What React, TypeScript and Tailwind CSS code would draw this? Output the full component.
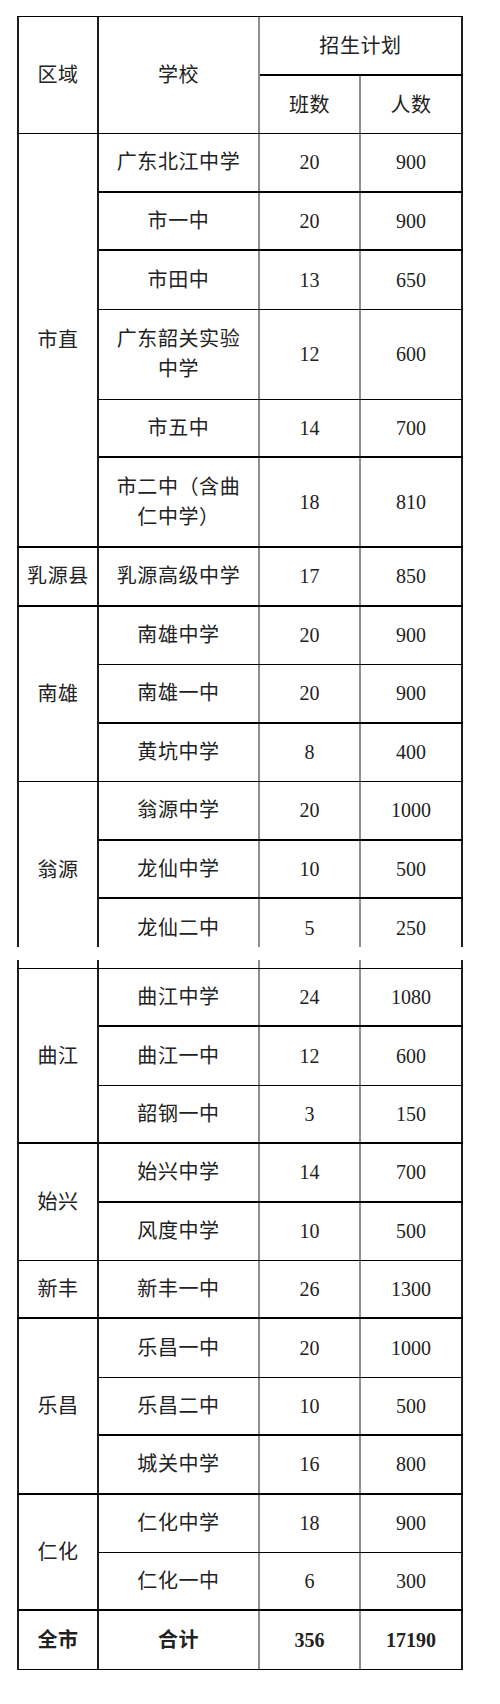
import React from "react";

type B = "t" | "n" | "x";
type Row = { school: string[]; cls: string; num: string; b: B; h?: string; clip?: boolean };
type Group = { region: string; rows: Row[]; b: B; clipRegion?: boolean; bold?: boolean };

const FONT = "font-['Liberation_Serif','Noto_Sans_CJK_SC',serif]";

const seg1: Group[] = [
  {
    region: "市直",
    b: "t",
    rows: [
      { school: ["广东北江中学"], cls: "20", num: "900", b: "t" },
      { school: ["市一中"], cls: "20", num: "900", b: "t" },
      { school: ["市田中"], cls: "13", num: "650", b: "n" },
      { school: ["广东韶关实验", "中学"], cls: "12", num: "600", b: "n", h: "h-[90px]" },
      { school: ["市五中"], cls: "14", num: "700", b: "t" },
      { school: ["市二中（含曲", "仁中学）"], cls: "18", num: "810", b: "x", h: "h-[90px]" },
    ],
  },
  { region: "乳源县", b: "t", rows: [{ school: ["乳源高级中学"], cls: "17", num: "850", b: "x" }] },
  {
    region: "南雄",
    b: "n",
    rows: [
      { school: ["南雄中学"], cls: "20", num: "900", b: "n" },
      { school: ["南雄一中"], cls: "20", num: "900", b: "t" },
      { school: ["黄坑中学"], cls: "8", num: "400", b: "x" },
    ],
  },
  {
    region: "翁源",
    b: "x",
    clipRegion: true,
    rows: [
      { school: ["翁源中学"], cls: "20", num: "1000", b: "t" },
      { school: ["龙仙中学"], cls: "10", num: "500", b: "t" },
      { school: ["龙仙二中"], cls: "5", num: "250", b: "x", clip: true },
    ],
  },
];

const seg2: Group[] = [
  {
    region: "曲江",
    b: "t",
    rows: [
      { school: ["曲江中学"], cls: "24", num: "1080", b: "t" },
      { school: ["曲江一中"], cls: "12", num: "600", b: "n" },
      { school: ["韶钢一中"], cls: "3", num: "150", b: "x" },
    ],
  },
  {
    region: "始兴",
    b: "n",
    rows: [
      { school: ["始兴中学"], cls: "14", num: "700", b: "t" },
      { school: ["风度中学"], cls: "10", num: "500", b: "x" },
    ],
  },
  { region: "新丰", b: "t", rows: [{ school: ["新丰一中"], cls: "26", num: "1300", b: "x" }] },
  {
    region: "乐昌",
    b: "t",
    rows: [
      { school: ["乐昌一中"], cls: "20", num: "1000", b: "n" },
      { school: ["乐昌二中"], cls: "10", num: "500", b: "t" },
      { school: ["城关中学"], cls: "16", num: "800", b: "x" },
    ],
  },
  {
    region: "仁化",
    b: "t",
    rows: [
      { school: ["仁化中学"], cls: "18", num: "900", b: "n" },
      { school: ["仁化一中"], cls: "6", num: "300", b: "x" },
    ],
  },
  { region: "全市", b: "n", bold: true, rows: [{ school: ["合计"], cls: "356", num: "17190", b: "x" }] },
];

function bottom(b: B) {
  if (b === "t") return "border-b-2 border-b-black";
  if (b === "n") return "border-b border-b-black";
  return "";
}

const THICK_L = "border-l-2 border-l-[#1e1e1e]";
const THICK_R = "border-r-2 border-r-[#1e1e1e]";
const GRAY_R = "border-r-2 border-r-[#8f8f8f]";

function RowView({ r, b, hDefault, bold }: { r: Row; b: B; hDefault: string; bold?: boolean }) {
  const h = r.h ?? hDefault;
  const cellBase = `flex items-center justify-center text-center shrink-0 ${r.clip ? h : "h-full"}`;
  const weight = bold ? "font-bold" : "font-normal";
  return (
    <div className={`flex shrink-0 ${r.clip ? "h-[48px] overflow-hidden items-start" : h} ${bottom(b)}`}>
      <div className={`${cellBase} w-[161px] ${GRAY_R} ${weight} tracking-[0.6px]`}>
        <div>
          {r.school.map((s, i) => (
            <div key={i}>{s}</div>
          ))}
        </div>
      </div>
      <div className={`${cellBase} w-[101px] ${GRAY_R} ${weight}`}>{r.cls}</div>
      <div className={`${cellBase} w-[102px] ${THICK_R} ${weight}`}>{r.num}</div>
    </div>
  );
}

function GroupView({ g, hDefault }: { g: Group; hDefault: string }) {
  const weight = g.bold ? "font-bold" : "font-normal";
  return (
    <div className="flex">
      <div
        className={`w-[82px] shrink-0 ${THICK_L} ${THICK_R} ${bottom(g.b)} ${
          g.clipRegion ? "h-[165px] overflow-hidden" : "flex items-center justify-center"
        } ${weight}`}
      >
        {g.clipRegion ? (
          <div className="h-[175.5px] flex items-center justify-center tracking-[0.6px]">{g.region}</div>
        ) : (
          <span className="tracking-[0.6px]">{g.region}</span>
        )}
      </div>
      <div className="flex flex-col">
        {g.rows.map((r, i) => (
          <RowView
            key={i}
            r={r}
            b={i === g.rows.length - 1 ? g.b : r.b}
            hDefault={hDefault}
            bold={g.bold}
          />
        ))}
      </div>
    </div>
  );
}

export default function App() {
  return (
    <div className={`w-[500px] h-[1704px] bg-white pt-[16px] pl-[17px] ${FONT} text-[20px] leading-[30px] text-[#222]`}>
      {/* Segment 1 */}
      <div className="w-[446px]">
        {/* Header */}
        <div className="flex h-[118px] border-t border-b border-black">
          <div className={`w-[82px] shrink-0 ${THICK_L} ${THICK_R} flex items-center justify-center tracking-[0.6px]`}>
            区域
          </div>
          <div className={`w-[161px] shrink-0 ${GRAY_R} flex items-center justify-center tracking-[0.6px]`}>
            学校
          </div>
          <div className="w-[203px] shrink-0 flex flex-col">
            <div className={`h-[59px] shrink-0 border-b-2 border-b-black ${THICK_R} flex items-center justify-center tracking-[0.6px]`}>
              招生计划
            </div>
            <div className="flex flex-1">
              <div className={`w-[101px] ${GRAY_R} flex items-center justify-center tracking-[0.6px]`}>班数</div>
              <div className={`w-[102px] ${THICK_R} flex items-center justify-center tracking-[0.6px]`}>人数</div>
            </div>
          </div>
        </div>
        {seg1.map((g, i) => (
          <GroupView key={i} g={g} hDefault="h-[58.5px]" />
        ))}
      </div>

      {/* Segment 2 */}
      <div className="w-[446px] mt-[13px]">
        <div className="flex h-[8px]">
          <div className={`w-[82px] shrink-0 ${THICK_L} ${THICK_R}`} />
          <div className={`w-[161px] shrink-0 ${GRAY_R}`} />
          <div className={`w-[101px] shrink-0 ${GRAY_R}`} />
          <div className={`w-[102px] shrink-0 ${THICK_R}`} />
        </div>
        <div className="border-t border-t-black">
          {seg2.map((g, i) => (
            <GroupView key={i} g={g} hDefault="h-[58.4px]" />
          ))}
        </div>
      </div>
    </div>
  );
}
